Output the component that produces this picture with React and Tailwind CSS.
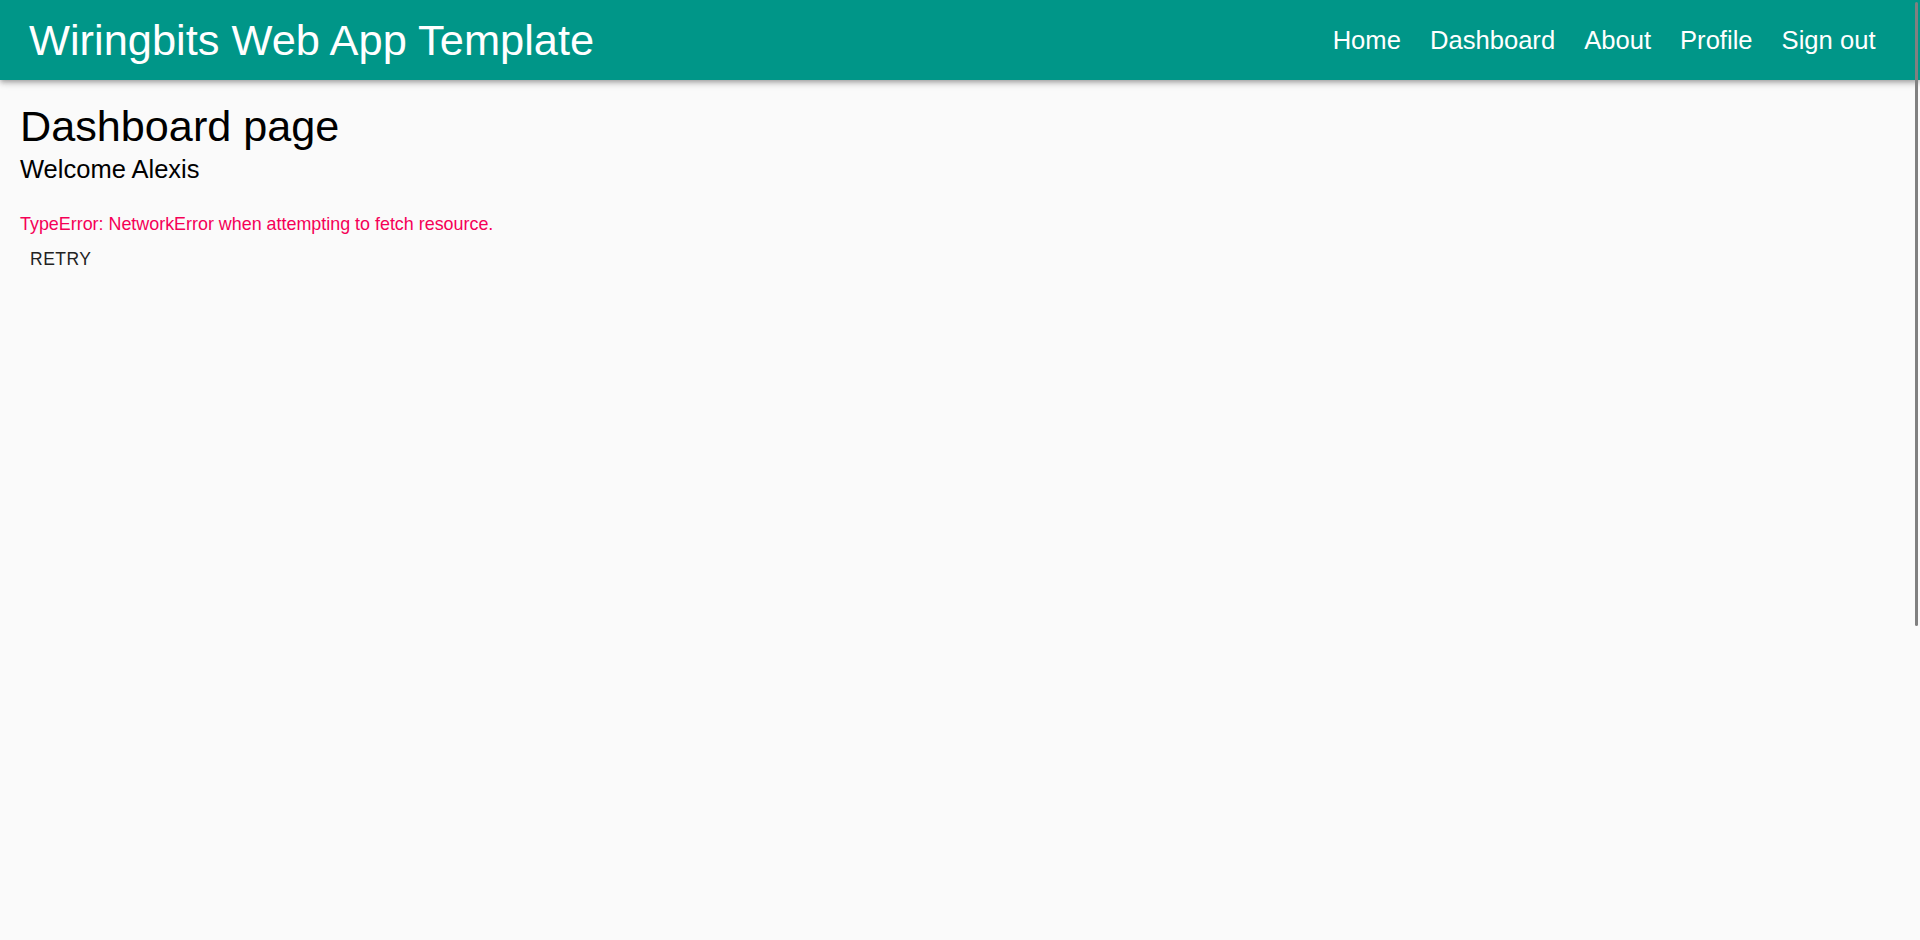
const links = ['Home', 'Dashboard', 'About', 'Profile', 'Sign out'];

export default function App() {
  return (
    <div className="min-h-screen bg-[#fafafa] text-black font-['Liberation_Sans',Arial,sans-serif]">
      <header className="relative z-10 flex h-[80px] items-center justify-between bg-[#009688] pl-[29px] pr-[30px] text-white shadow-[0px_2px_4px_-1px_rgba(0,0,0,0.2),0px_4px_5px_0px_rgba(0,0,0,0.14),0px_1px_10px_0px_rgba(0,0,0,0.12)]">
        <h1 className="text-[43.4px] leading-[52px]">Wiringbits Web App Template</h1>
        <nav className="flex items-center">
          {links.map(l => (
            <a key={l} href="#" className="px-[14.5px] text-[25.6px] leading-[36px]">{l}</a>
          ))}
        </nav>
      </header>

      <main className="px-[20px] pt-[20px]">
        <h2 className="text-[43.2px] leading-[52px]">Dashboard page</h2>
        <h3 className="text-[25.5px] leading-[35px]">Welcome Alexis</h3>
        <p className="mt-[25px] text-[17.9px] leading-[24px] text-[#f50057]">
          TypeError: NetworkError when attempting to fetch resource.
        </p>
        <button className="px-[10px] py-[7.5px] text-[17.5px] leading-[30.6px] tracking-[0.5px] text-[#222222] uppercase">
          Retry
        </button>
      </main>

      {/* overlay scrollbar thumb */}
      <div className="fixed right-[2px] top-[2px] z-20 h-[624px] w-[3px] rounded-full bg-[#808080]"></div>
    </div>
  );
}
